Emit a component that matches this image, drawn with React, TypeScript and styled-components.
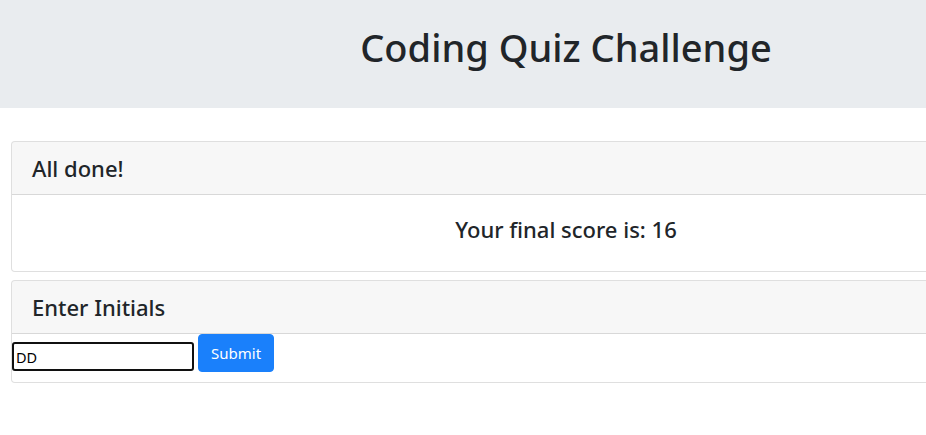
import React from "react";
import styled, { createGlobalStyle } from "styled-components";

const Global = createGlobalStyle`
  html, body { margin: 0; padding: 0; overflow: hidden; background: #fff; }
  body {
    font-family: "Noto Sans", "Open Sans", sans-serif;
    color: #212529;
    font-size: 16px;
    line-height: 1.5;
  }
`;

const Page = styled.div`
  width: 1132px;
`;

const Jumbo = styled.header`
  background: #e9ecef;
  height: 108px;
  display: flex;
  align-items: center;
  justify-content: center;
  margin-bottom: 33px;
`;

const Title = styled.h1`
  margin: 0;
  font-size: 38px;
  font-weight: 500;
  line-height: 1.2;
  padding-bottom: 12px;
`;

const Stack = styled.div`
  margin-left: 11px;
  width: 1110px;
  display: flex;
  flex-direction: column;
  gap: 8px;
`;

const Card = styled.section`
  border: 1px solid rgba(0, 0, 0, 0.125);
  border-radius: 4px;
  background: #fff;
  overflow: hidden;
`;

const CardHeader = styled.div`
  background: rgba(0, 0, 0, 0.03);
  border-bottom: 1px solid rgba(0, 0, 0, 0.125);
  padding: 12px 20px;
`;

const HeaderText = styled.h4`
  margin: 0;
  font-size: 22px;
  font-weight: 500;
  line-height: 28px;
`;

const CardBody = styled.div`
  padding: 20px;
  text-align: center;
`;

const Score = styled.h4`
  margin: 0 0 8px;
  font-size: 22px;
  font-weight: 500;
  line-height: 28px;
`;

const FormBody = styled.form`
  display: flex;
  align-items: center;
  gap: 4px;
  padding: 0 0 10px;
  margin: 0;
`;

const Input = styled.input`
  box-sizing: border-box;
  width: 182px;
  height: 29px;
  border: 2px solid #101010;
  border-radius: 3px;
  padding: 1px 2px;
  font-family: "Noto Sans", sans-serif;
  font-size: 14.5px;
  color: #000;
  outline: none;
  margin-top: 7px;
`;

const Button = styled.button`
  box-sizing: border-box;
  height: 38px;
  padding: 6px 12px;
  background: #1a80fb;
  color: #fff;
  border: 1px solid #1a80fb;
  border-radius: 4px;
  font-family: "Noto Sans", sans-serif;
  font-size: 15px;
  line-height: 24px;
`;

export default function App() {
  return (
    <Page>
      <Global />
      <Jumbo>
        <Title>Coding Quiz Challenge</Title>
      </Jumbo>
      <Stack>
        <Card>
          <CardHeader>
            <HeaderText>All done!</HeaderText>
          </CardHeader>
          <CardBody>
            <Score>Your final score is: 16</Score>
          </CardBody>
        </Card>
        <Card>
          <CardHeader>
            <HeaderText>Enter Initials</HeaderText>
          </CardHeader>
          <FormBody onSubmit={(e) => e.preventDefault()}>
            <Input defaultValue="DD" />
            <Button type="submit">Submit</Button>
          </FormBody>
        </Card>
      </Stack>
    </Page>
  );
}
